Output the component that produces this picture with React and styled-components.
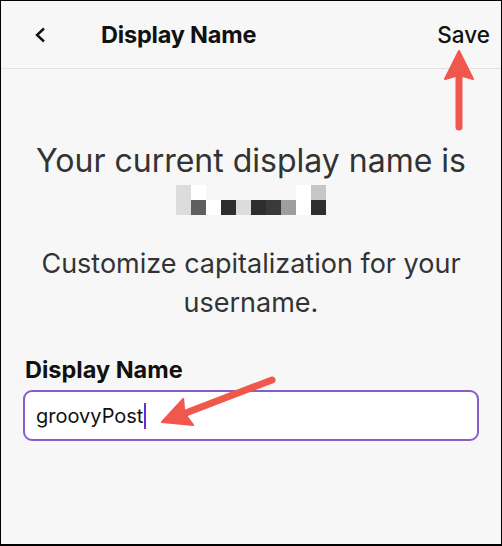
import React from "react";
import styled, { createGlobalStyle } from "styled-components";

const GlobalStyle = createGlobalStyle`
  body {
    margin: 0;
    background: #000;
    font-family: Inter, "Noto Sans", Arial, sans-serif;
  }
`;

const Frame = styled.div`
  position: relative;
  width: 502px;
  height: 546px;
  box-sizing: border-box;
  border: 1px solid #000;
  border-bottom-width: 2px;
  background: #f7f7f7;
  overflow: hidden;
`;

const Header = styled.header`
  height: 67px;
  display: flex;
  align-items: center;
  padding: 0 11px 0 26px;
  border-bottom: 1px solid #e2e2e2;
  color: #111;
`;

const BackButton = styled.div`
  width: 26px;
  height: 26px;
  display: flex;
  align-items: center;
  justify-content: center;
`;

const Title = styled.h1`
  margin: 0 0 0 48px;
  flex: 1;
  font-size: 23.5px;
  font-weight: 700;
  letter-spacing: -0.2px;
`;

const SaveButton = styled.div`
  font-size: 22.5px;
  font-weight: 500;
`;

const Body = styled.main`
  display: flex;
  flex-direction: column;
  align-items: center;
  padding: 72px 22px 0;
`;

const Heading = styled.p`
  margin: 0;
  font-size: 32px;
  font-weight: 400;
  color: #333;
  text-align: center;
`;

const Pixelated = styled.div`
  display: grid;
  grid-template-columns: repeat(10, 15px);
  grid-auto-rows: 15px;
  margin-top: 5px;
`;

const Cell = styled.div`
  background: ${(p) => p.$c || "transparent"};
`;

const Description = styled.p`
  margin: 29px 0 0;
  font-size: 27px;
  line-height: 39px;
  color: #333;
  text-align: center;
`;

const Field = styled.div`
  align-self: stretch;
  margin-top: 33px;
  display: flex;
  flex-direction: column;
  gap: 6px;
`;

const Label = styled.label`
  font-size: 23.5px;
  font-weight: 700;
  color: #111;
  padding-left: 2px;
`;

const InputBox = styled.div`
  height: 51px;
  box-sizing: border-box;
  border: 2px solid #8a5cc7;
  border-radius: 9px;
  background: #fff;
  display: flex;
  align-items: center;
  padding-left: 11px;
  font-size: 20px;
  color: #111;
`;

const Caret = styled.span`
  display: inline-block;
  width: 2px;
  height: 26px;
  background: #6a2bd0;
  margin-left: 1px;
`;

const Overlay = styled.svg`
  position: absolute;
  left: 0;
  top: 0;
  pointer-events: none;
`;

const top = ["#dcdcdc", "#fff", null, null, null, null, null, null, "#fff", "#c6c6c6"];
const bottom = ["#dcdcdc", "#5f5f5f", "#fff", "#2e2e30", "#dcdcdc", "#2e2e30", "#39393b", "#9e9e9e", "#fff", "#2e2e30"];

const Arrow = ({ x1, y1, x2, y2 }) => {
  const dx = x2 - x1;
  const dy = y2 - y1;
  const len = Math.hypot(dx, dy);
  const ux = dx / len;
  const uy = dy / len;
  const head = 28;
  const half = 14;
  const bx = x2 - ux * head;
  const by = y2 - uy * head;
  const pts = `${x2},${y2} ${bx - uy * half},${by + ux * half} ${bx + ux * 4},${by + uy * 4} ${bx + uy * half},${by - ux * half}`;
  return (
    <g>
      <line x1={x1} y1={y1} x2={bx + ux * 4} y2={by + uy * 4} stroke="#f0574d" strokeWidth="7" strokeLinecap="round" />
      <polygon points={pts} fill="#f0574d" stroke="#f0574d" strokeWidth="2" strokeLinejoin="round" />
    </g>
  );
};

export default function App() {
  return (
    <>
      <GlobalStyle />
      <Frame>
        <Header>
          <BackButton>
            <svg width="14" height="16" viewBox="0 0 14 16">
              <path d="M11 1.5 L4 8 L11 14.5" fill="none" stroke="#111" strokeWidth="2.4" />
            </svg>
          </BackButton>
          <Title>Display Name</Title>
          <SaveButton>Save</SaveButton>
        </Header>
        <Body>
          <Heading>Your current display name is</Heading>
          <Pixelated>
            {top.map((c, i) => (
              <Cell key={"t" + i} $c={c} />
            ))}
            {bottom.map((c, i) => (
              <Cell key={"b" + i} $c={c} />
            ))}
          </Pixelated>
          <Description>
            Customize capitalization for your
            <br />
            username.
          </Description>
          <Field>
            <Label>Display Name</Label>
            <InputBox>
              groovyPost
              <Caret />
            </InputBox>
          </Field>
        </Body>
        <Overlay width="502" height="546">
          <Arrow x1={458} y1={126} x2={458} y2={50} />
          <Arrow x1={271} y1={379} x2={161} y2={421} />
        </Overlay>
      </Frame>
    </>
  );
}
